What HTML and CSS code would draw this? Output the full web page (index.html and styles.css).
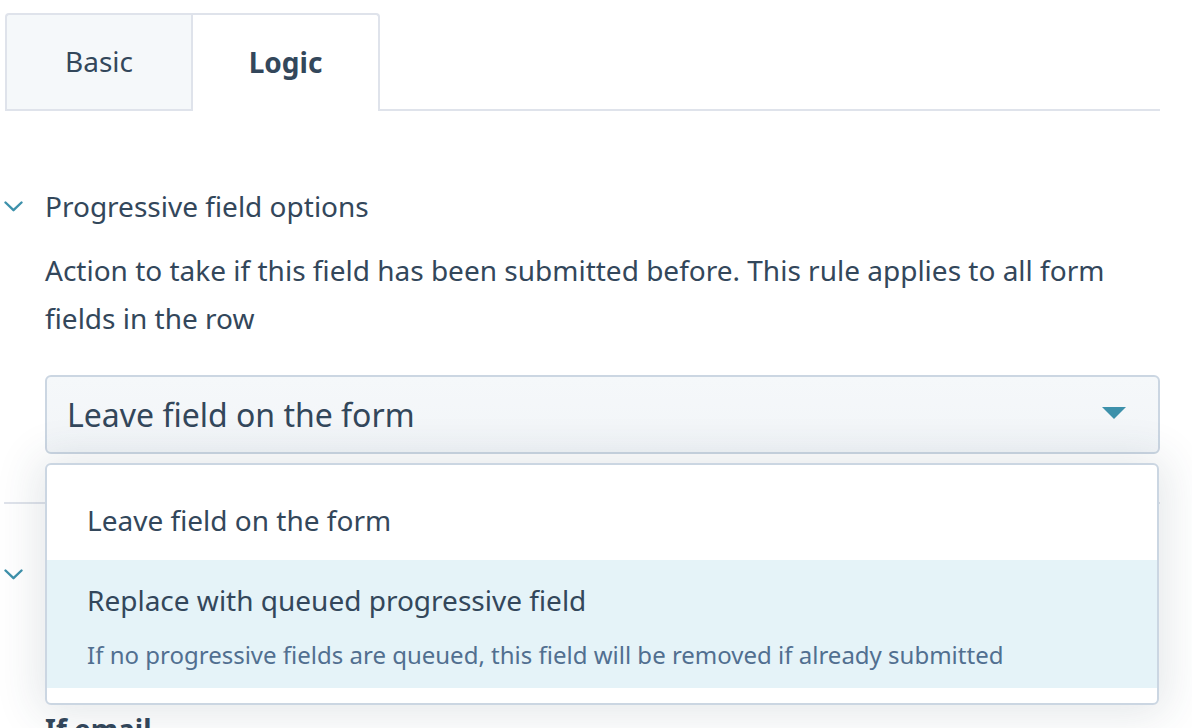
FILE: index.html
```html
<!DOCTYPE html>
<html>
<head>
<meta charset="utf-8">
<link rel="stylesheet" href="styles.css">
</head>
<body>
<div class="page">
  <div class="tabs">
    <div class="tab tab-basic">Basic</div>
    <div class="tab tab-logic">Logic</div>
    <div class="tab-fill"></div>
  </div>

  <div class="section first">
    <div class="sec-head">
      <span class="chev"><svg width="19" height="11" viewBox="0 0 19 11"><polyline points="1.5,1.5 9.5,9.2 17.5,1.5" fill="none" stroke="#3d91ab" stroke-width="2.4" stroke-linecap="round" stroke-linejoin="round"/></svg></span>
      <span class="sec-title">Progressive field options</span>
    </div>
    <div class="sec-body">
      <p class="desc">Action to take if this field has been submitted before. This rule applies to all form fields in the row</p>
      <div class="select-wrap">
        <div class="select">
          <span class="select-value">Leave field on the form</span>
          <svg class="caret" width="24" height="12" viewBox="0 0 24 12"><polygon points="0,0 24,0 12,12" fill="#3d91ab"/></svg>
        </div>
        <div class="dropdown">
          <div class="option">
            <div class="opt-title">Leave field on the form</div>
          </div>
          <div class="option active">
            <div class="opt-title">Replace with queued progressive field</div>
            <div class="opt-help">If no progressive fields are queued, this field will be removed if already submitted</div>
          </div>
        </div>
      </div>
    </div>
  </div>

  <div class="section second">
    <div class="sec-head">
      <span class="chev"><svg width="19" height="11" viewBox="0 0 19 11"><polyline points="1.5,1.5 9.5,9.2 17.5,1.5" fill="none" stroke="#3d91ab" stroke-width="2.4" stroke-linecap="round" stroke-linejoin="round"/></svg></span>
    </div>
    <div class="sec-body">
      <div class="label">If email</div>
    </div>
  </div>
</div>
</body>
</html>
```

FILE: styles.css
```css
html, body {
  margin: 0;
  padding: 0;
  background: #ffffff;
}
body {
  width: 1192px;
  height: 728px;
  overflow: hidden;
  font-family: "Noto Sans", "Open Sans", sans-serif;
  color: #33475b;
  font-size: 28px;
  line-height: 48px;
}
.page {
  width: 1160px;
}
.tabs {
  display: flex;
  padding-top: 13px;
  margin-left: 5px;
}
.tab {
  box-sizing: border-box;
  height: 98px;
  display: flex;
  align-items: center;
  justify-content: center;
  font-size: 28px;
  color: #33475b;
  padding-bottom: 2px;
}
.tab-basic {
  width: 186px;
  background: #f5f8fa;
  border: 2px solid #dfe3eb;
  border-right: none;
  border-radius: 4px 0 0 0;
}
.tab-logic {
  width: 189px;
  background: #ffffff;
  border: 2px solid #dfe3eb;
  border-bottom: none;
  border-radius: 0 4px 0 0;
  font-weight: 700;
}
.tab-fill {
  flex: 1;
  border-bottom: 2px solid #dfe3eb;
}

.section.first {
  padding-top: 71px;
}
.sec-head {
  display: flex;
  align-items: center;
  height: 48px;
}
.chev {
  width: 45px;
  box-sizing: border-box;
  padding-left: 4px;
  display: flex;
  align-items: center;
  padding-top: 1px;
}
.sec-title {
  font-size: 28px;
}
.sec-body {
  padding-left: 45px;
}
.desc {
  margin: 16px 0 0;
  font-size: 28px;
  line-height: 48px;
}
.select-wrap {
  position: relative;
  margin-top: 33px;
}
.select {
  box-sizing: border-box;
  height: 79px;
  background: linear-gradient(#f5f8fa, #f2f5f8);
  border: 2px solid #cbd6e2;
  border-radius: 6px;
  display: flex;
  align-items: center;
  justify-content: space-between;
  padding: 0 32px 0 20px;
}
.select-value {
  font-size: 32px;
}
.caret {
  margin-top: -3px;
}
.dropdown {
  position: absolute;
  z-index: 5;
  top: 88px;
  left: 0;
  width: 1114px;
  box-sizing: border-box;
  background: #ffffff;
  border: 2px solid #cbd6e2;
  border-radius: 6px;
  padding: 15px 0 15px;
  box-shadow: 0 2px 44px 8px rgba(45, 62, 80, 0.12);
}
.option {
  padding: 16px 40px;
}
.opt-title {
  font-size: 28px;
  line-height: 48px;
}
.option.active {
  background: #e5f3f8;
  padding-bottom: 14px;
}
.opt-help {
  margin-top: 12px;
  font-size: 24px;
  line-height: 38px;
  color: #516f90;
}

.section.second {
  margin-top: 48px;
  border-top: 2px solid #dfe3eb;
  margin-left: 4px;
  padding-top: 46px;
}
.section.second .chev {
  padding-left: 0;
  width: 41px;
}
.section.second .sec-body {
  padding-left: 41px;
}
.label {
  margin-top: 107px;
  font-weight: 700;
  font-size: 28px;
}
```
